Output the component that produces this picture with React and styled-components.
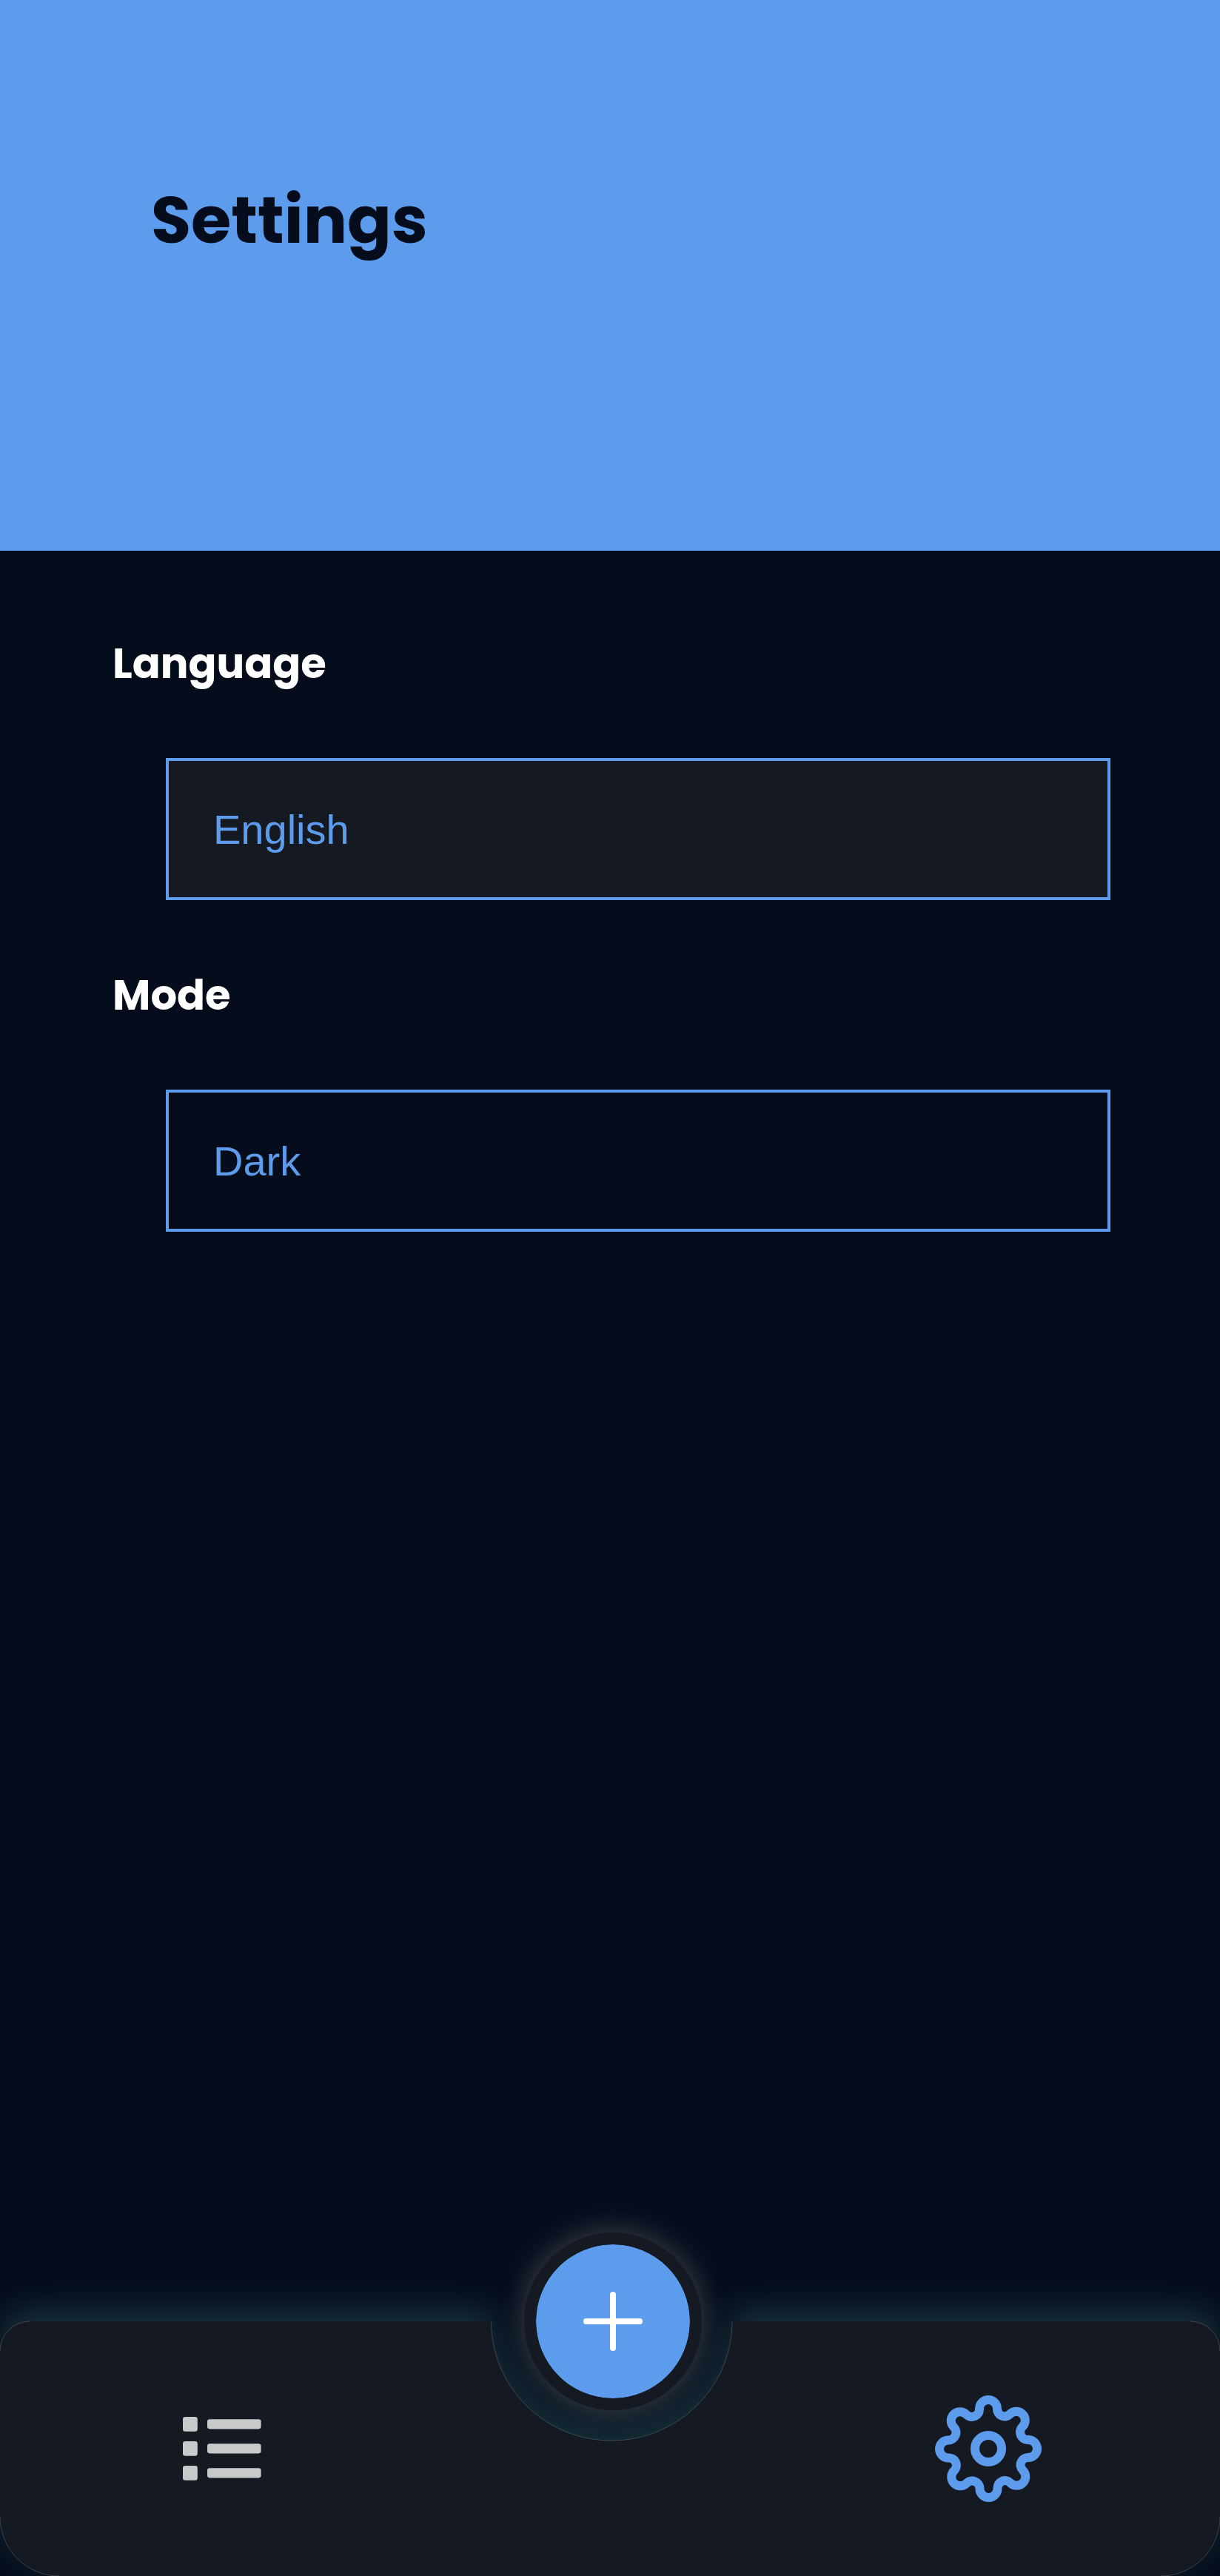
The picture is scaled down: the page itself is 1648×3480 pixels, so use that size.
import React from "react";
import styled, { createGlobalStyle } from "styled-components";
import { FaList } from "react-icons/fa";
import { FiSettings } from "react-icons/fi";

const c = {
  bg: "#050c1b",
  surface: "#151a22",
  accent: "#5d9cec",
  muted: "#c8c9cb",
};

const GlobalStyle = createGlobalStyle`
  * { box-sizing: border-box; }
  body { margin: 0; background: ${c.bg}; }
`;

const Screen = styled.div`
  display: flex;
  flex-direction: column;
  height: 3480px;
  overflow: hidden;
  background: ${c.bg};
  font-family: Poppins, Inter, sans-serif;
`;

const Header = styled.header`
  height: 744px;
  padding: 232px 204px 0;
  background: ${c.accent};
`;

const Title = styled.h1`
  margin: 0;
  color: ${c.bg};
  font-size: 88px;
  font-weight: 700;
  line-height: 132px;
`;

const Content = styled.main`
  flex: 1;
  padding: 111px 148px 0 152px;
`;

const Field = styled.section`
  height: 448px;
`;

const Label = styled.h2`
  margin: 0 0 85px;
  color: #fff;
  font-size: 56px;
  font-weight: 700;
  line-height: 84px;
`;

const Select = styled.button`
  display: flex;
  align-items: center;
  width: 1276px;
  height: 192px;
  margin: 0 0 0 72px;
  padding: 0 60px;
  border: 4px solid ${c.accent};
  background: ${(p) => (p.$filled ? c.surface : "transparent")};
  color: ${c.accent};
  font-family: "Liberation Sans", Arial, sans-serif;
  font-size: 56px;
`;

const Nav = styled.nav`
  position: relative;
  display: flex;
  justify-content: space-between;
  height: 344px;
  padding: 0 241.5px 0 247px;
`;

const NavShape = styled.svg`
  position: absolute;
  inset: 0;
  overflow: visible;
  filter: drop-shadow(0 -16px 22px rgba(32, 70, 76, 0.65));
`;

const NavItem = styled.button`
  position: relative;
  display: flex;
  align-items: center;
  padding: 0;
  border: 0;
  background: none;
  color: ${(p) => (p.$active ? c.accent : c.muted)};
`;

const AddButton = styled.button`
  position: absolute;
  left: 708px;
  top: -120px;
  display: grid;
  place-items: center;
  width: 240px;
  height: 240px;
  padding: 0;
  border: 16px solid ${c.surface};
  border-radius: 50%;
  background: ${c.accent};
  background-clip: padding-box;
  box-shadow: 0 0 40px rgba(255, 255, 255, 0.24);
`;

const shape =
  "M0 40A40 40 0 0 1 40 0H663.5C663.5 89 736 161 826 161S989 89 989 0H1608A40 40 0 0 1 1648 40V264A80 80 0 0 1 1568 344H80A80 80 0 0 1 0 264Z";
const rims =
  "M0 40A40 40 0 0 1 40 0M663.5 0C663.5 89 736 161 826 161S989 89 989 0M1608 0A40 40 0 0 1 1648 40M1648 264A80 80 0 0 1 1568 344M80 344A80 80 0 0 1 0 264";

export default function App() {
  return (
    <Screen>
      <GlobalStyle />
      <Header>
        <Title>Settings</Title>
      </Header>
      <Content>
        <Field>
          <Label>Language</Label>
          <Select $filled>English</Select>
        </Field>
        <Field>
          <Label>Mode</Label>
          <Select>Dark</Select>
        </Field>
      </Content>
      <Nav>
        <NavShape width="1648" height="344" viewBox="0 0 1648 344">
          <path d={shape} fill={c.surface} />
          <path d={rims} fill="none" stroke="#8a9297" strokeOpacity=".35" strokeWidth="1" />
        </NavShape>
        <NavItem aria-label="List">
          <FaList size={105.6} />
        </NavItem>
        <AddButton aria-label="Add">
          <svg width="80" height="80" viewBox="0 0 80 80" fill="#fff">
            <rect x="36" width="8" height="80" rx="4" />
            <rect y="36" width="80" height="8" rx="4" />
          </svg>
        </AddButton>
        <NavItem $active aria-label="Settings">
          <FiSettings size={144} />
        </NavItem>
      </Nav>
    </Screen>
  );
}
